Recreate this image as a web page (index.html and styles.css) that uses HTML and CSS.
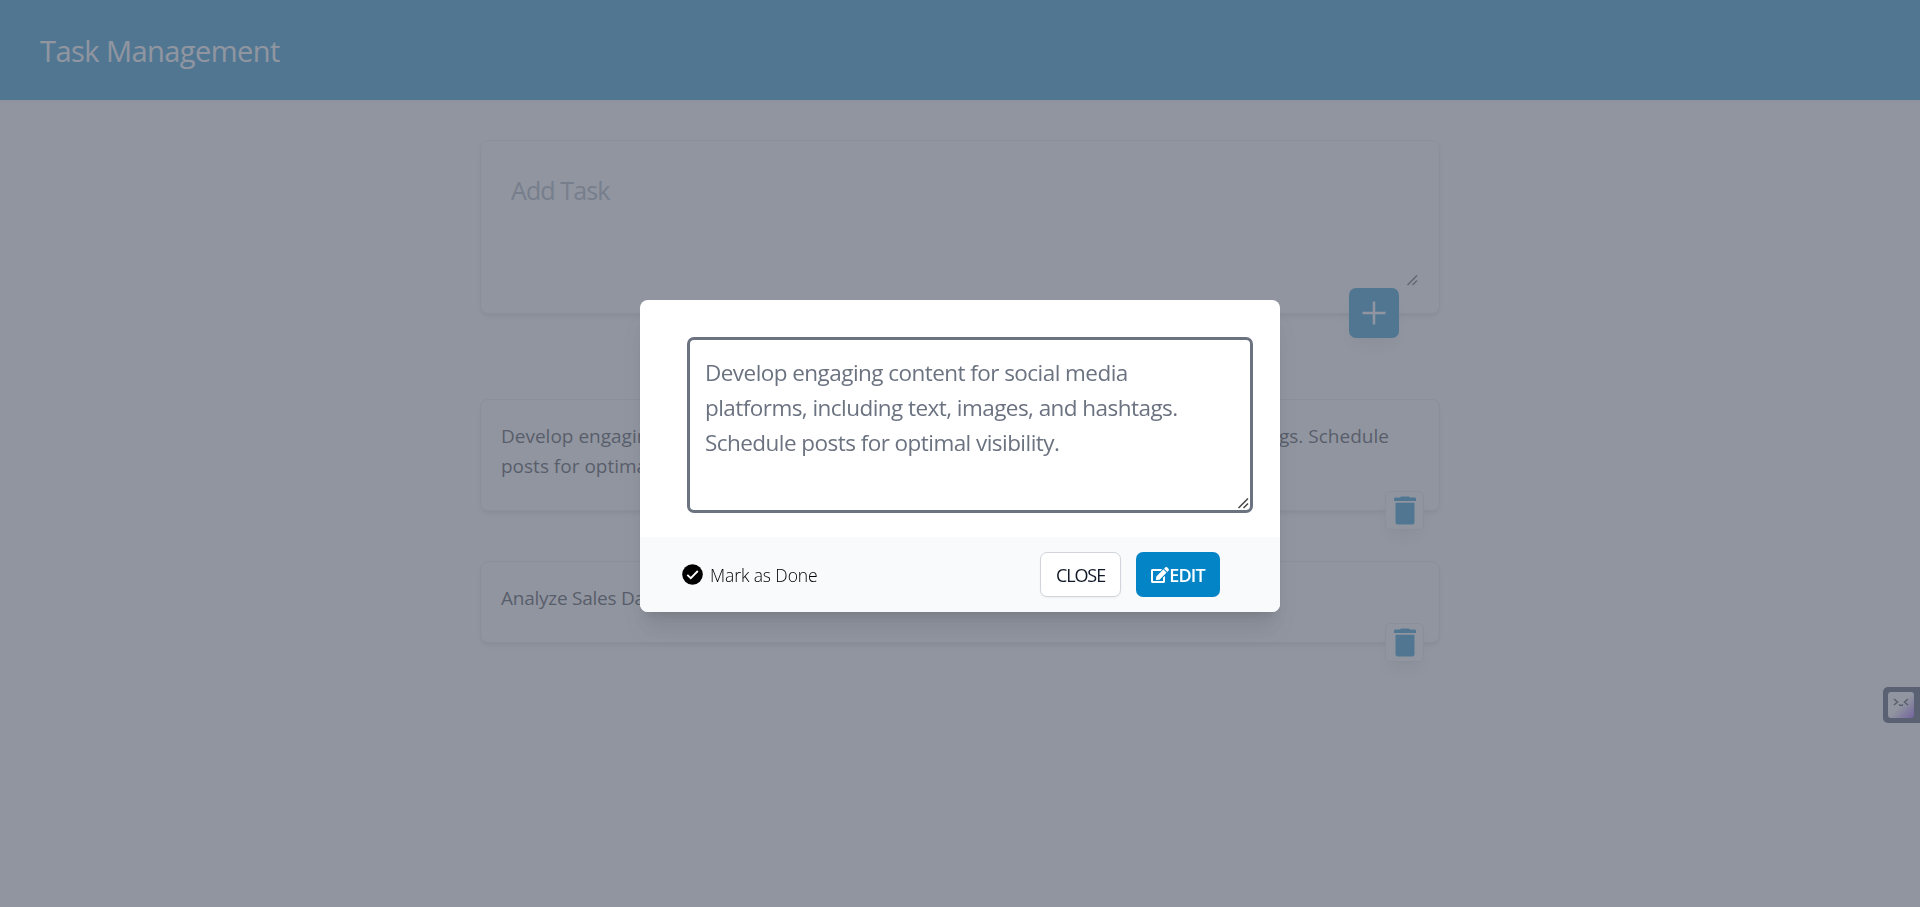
FILE: index.html
```html
<!DOCTYPE html>
<html lang="en">
<head>
<meta charset="utf-8">
<title>Task Management</title>
<link rel="stylesheet" href="styles.css">
</head>
<body>
<header class="header"><h1 class="title">Task Management</h1></header>
<main class="board">
  <form class="card composer">
    <textarea class="composer-input" placeholder="Add Task"></textarea>
    <svg class="grip composer-grip" width="11" height="11" viewBox="0 0 11 11"><path d="M.5 10L10 .5M5.500 10L10 5.500"/></svg>
    <button class="add" type="button" aria-label="Add"><svg width="24" height="24" viewBox="0 0 24 24"><path d="M12 .5v23M.5 12h23" stroke="#fff" stroke-width="2.500"/></svg></button>
  </form>
  <article class="card task task-long">
    <p class="task-text">Develop engaging content for social media platforms, including text, images, and hashtags. Schedule<br>posts for optimal visibility.</p>
    <button class="trash" type="button" aria-label="Delete"><svg width="22" height="29" viewBox="0 0 22 29"><path d="M6 1.6Q6.500 .4 8 .4h6q1.500 0 2 1.200h4.500q1.500 0 1.500 1.200V5H0V2.800q0-1.200 1.500-1.200zM1.500 6.700h19v19.600q0 2.300-2.300 2.300H3.800q-2.300 0-2.300-2.300z"/></svg></button>
  </article>
  <article class="card task">
    <p class="task-text task-text-short">Analyze Sales Data</p>
    <button class="trash" type="button" aria-label="Delete"><svg width="22" height="29" viewBox="0 0 22 29"><path d="M6 1.6Q6.500 .4 8 .4h6q1.500 0 2 1.200h4.500q1.500 0 1.500 1.200V5H0V2.800q0-1.200 1.500-1.200zM1.500 6.700h19v19.600q0 2.300-2.300 2.300H3.800q-2.300 0-2.300-2.300z"/></svg></button>
  </article>
</main>
<aside class="widget">
  <svg width="26" height="26" viewBox="0 0 26 26"><defs><linearGradient id="face" x1="0" y1="0" x2="1" y2="1"><stop offset=".5" stop-color="#fff"/><stop offset="1" stop-color="#8d3cf5"/></linearGradient></defs><rect width="26" height="26" rx="3" fill="url(#face)"/><path d="M6 7l3.500 3L6 13M20 7l-3.500 3 3.500 3M11 12.500q2 2 4 0" fill="none" stroke="#262b38" stroke-width="1.600"/></svg>
</aside>
<div class="overlay">
  <section class="modal">
    <div class="modal-body">
      <textarea class="edit-input">Develop engaging content for social media
platforms, including text, images, and hashtags.
Schedule posts for optimal visibility.</textarea>
      <svg class="grip edit-grip" width="11" height="11" viewBox="0 0 11 11"><path d="M.5 10L10 .5M5.500 10L10 5.500"/></svg>
    </div>
    <footer class="modal-footer">
      <div class="done"><svg width="21" height="21" viewBox="0 0 21 21"><circle cx="10.500" cy="10.500" r="10.300"/><path d="M5.300 10.800l3.500 3.400 7-7.200" fill="none" stroke="#fff" stroke-width="1.800"/></svg><span>Mark as Done</span></div>
      <div class="actions">
        <button class="btn close" type="button">CLOSE</button>
        <button class="btn edit" type="button"><svg width="18" height="18" viewBox="0 0 576 512"><path fill="#fff" d="M402.600 83.200l90.200 90.200c3.800 3.800 3.800 10 0 13.800L274.400 405.600l-92.800 10.300c-12.400 1.400-22.900-9.100-21.500-21.500l10.300-92.800L388.800 83.200c3.800-3.800 10-3.800 13.800 0zm162-22.900l-48.800-48.800c-15.200-15.200-39.900-15.200-55.200 0l-35.400 35.400c-3.800 3.800-3.800 10 0 13.800l90.200 90.200c3.800 3.800 10 3.800 13.800 0l35.400-35.400c15.200-15.300 15.200-40 0-55.200zM384 346.200V448H64V128h229.800c3.200 0 6.200-1.300 8.500-3.500l40-40c7.600-7.600 2.200-20.500-8.500-20.500H48C21.500 64 0 85.500 0 112v352c0 26.500 21.500 48 48 48h352c26.500 0 48-21.500 48-48V306.200c0-10.700-12.900-16-20.500-8.500l-40 40c-2.200 2.300-3.500 5.300-3.500 8.500z"/></svg><span>EDIT</span></button>
      </div>
    </footer>
  </section>
</div>
</body>
</html>
```
FILE: styles.css
```css
* { box-sizing: border-box; margin: 0; }
body { background: #fff; font-family: "Open Sans", "Noto Sans", sans-serif; height: 907px; overflow: hidden; }
button, textarea { font-family: inherit; }
button { border: 0; padding: 0; }
svg { display: block; flex: none; }
.header { height: 100px; padding: 0 40px; display: flex; align-items: center; background: #0284c7; box-shadow: 0 1px 3px rgba(0,0,0,.1); }
.title { font-size: 29px; font-weight: 400; line-height: 36px; color: #fff; letter-spacing: -.55px; padding-top: 2px; }
.board { width: 960px; margin: 40px auto 0; display: flex; flex-direction: column; }
.card { position: relative; border: 1px solid #e5e7eb; border-radius: 8px; background: #fff; box-shadow: 0 4px 6px -1px rgba(0,0,0,.1), 0 2px 4px -2px rgba(0,0,0,.1); }
.composer { height: 174px; padding: 20px; }
.composer-input { display: block; width: 100%; height: 125px; padding: 11px 10px 9px; border: 0; outline: 0; resize: none; background: transparent; font-size: 25px; line-height: 36px; letter-spacing: -.9px; }
.composer-input::placeholder { color: #9ca3af; }
.grip { position: absolute; fill: none; stroke: #444; stroke-width: 1.5; }
.composer-grip { right: 21px; bottom: 27px; }
.edit-grip { right: 31px; bottom: 28px; }
.add { position: absolute; right: 40px; bottom: -25px; width: 50px; height: 50px; border-radius: 7px; background: #0284c7; display: grid; place-items: center; box-shadow: 0 10px 15px -3px rgba(0,0,0,.1); }
.task { height: 82px; padding: 21px 20px 19px; margin-top: 50px; }
.task-long { height: 112px; margin-top: 85px; }
.task-text { font-size: 19px; line-height: 30px; white-space: nowrap; letter-spacing: 0; color: #1f2328; }
.task-text-short { letter-spacing: -.25px; }
.trash { position: absolute; right: 15px; bottom: -20px; width: 39px; height: 39px; border: 1px solid #e5e7eb; border-radius: 5px; background: #fff; display: grid; place-items: center; box-shadow: 0 10px 15px -3px rgba(0,0,0,.1); }
.trash svg { fill: #0284c7; }
.widget { position: absolute; right: 0; top: 687px; width: 37px; height: 36px; padding: 5px; border-radius: 5px 0 0 5px; background: #263047; }
.overlay { position: fixed; inset: 0; background: rgba(107,114,128,.75); display: flex; justify-content: center; align-items: flex-start; padding-top: 300px; }
.modal { width: 640px; height: 312px; border-radius: 8px; overflow: hidden; background: #fff; box-shadow: 0 20px 25px -5px rgba(0,0,0,.1), 0 8px 10px -6px rgba(0,0,0,.1); }
.modal-body { position: relative; height: 237px; padding: 37px 27px 0 47px; }
.edit-input { display: block; width: 566px; height: 176px; border: 3px solid #6b7280; border-radius: 7px; outline: 0; resize: none; padding: 15px; font-size: 22.5px; line-height: 35px; letter-spacing: -.55px; color: #6b7280; white-space: pre; overflow: hidden; }
.modal-footer { height: 75px; padding: 15px 60px 15px 42px; background: #f9fafb; display: flex; justify-content: space-between; }
.done { display: flex; align-items: center; gap: 7px; font-size: 17.5px; font-weight: 300; letter-spacing: -.1px; }
.done svg { margin-bottom: 1px; }
.done span { padding-top: 1px; }
.actions { display: flex; gap: 15px; }
.btn { height: 45px; padding-top: 1px; border-radius: 7px; display: flex; align-items: center; justify-content: center; font-size: 18px; line-height: 25px; font-weight: 500; letter-spacing: -1.1px; }
.close { width: 81px; border: 1px solid #d1d5db; background: #fff; color: #111827; box-shadow: 0 1px 2px rgba(0,0,0,.05); }
.edit { width: 84px; background: #0284c7; color: #fff; font-weight: 600; letter-spacing: -.8px; }
```
